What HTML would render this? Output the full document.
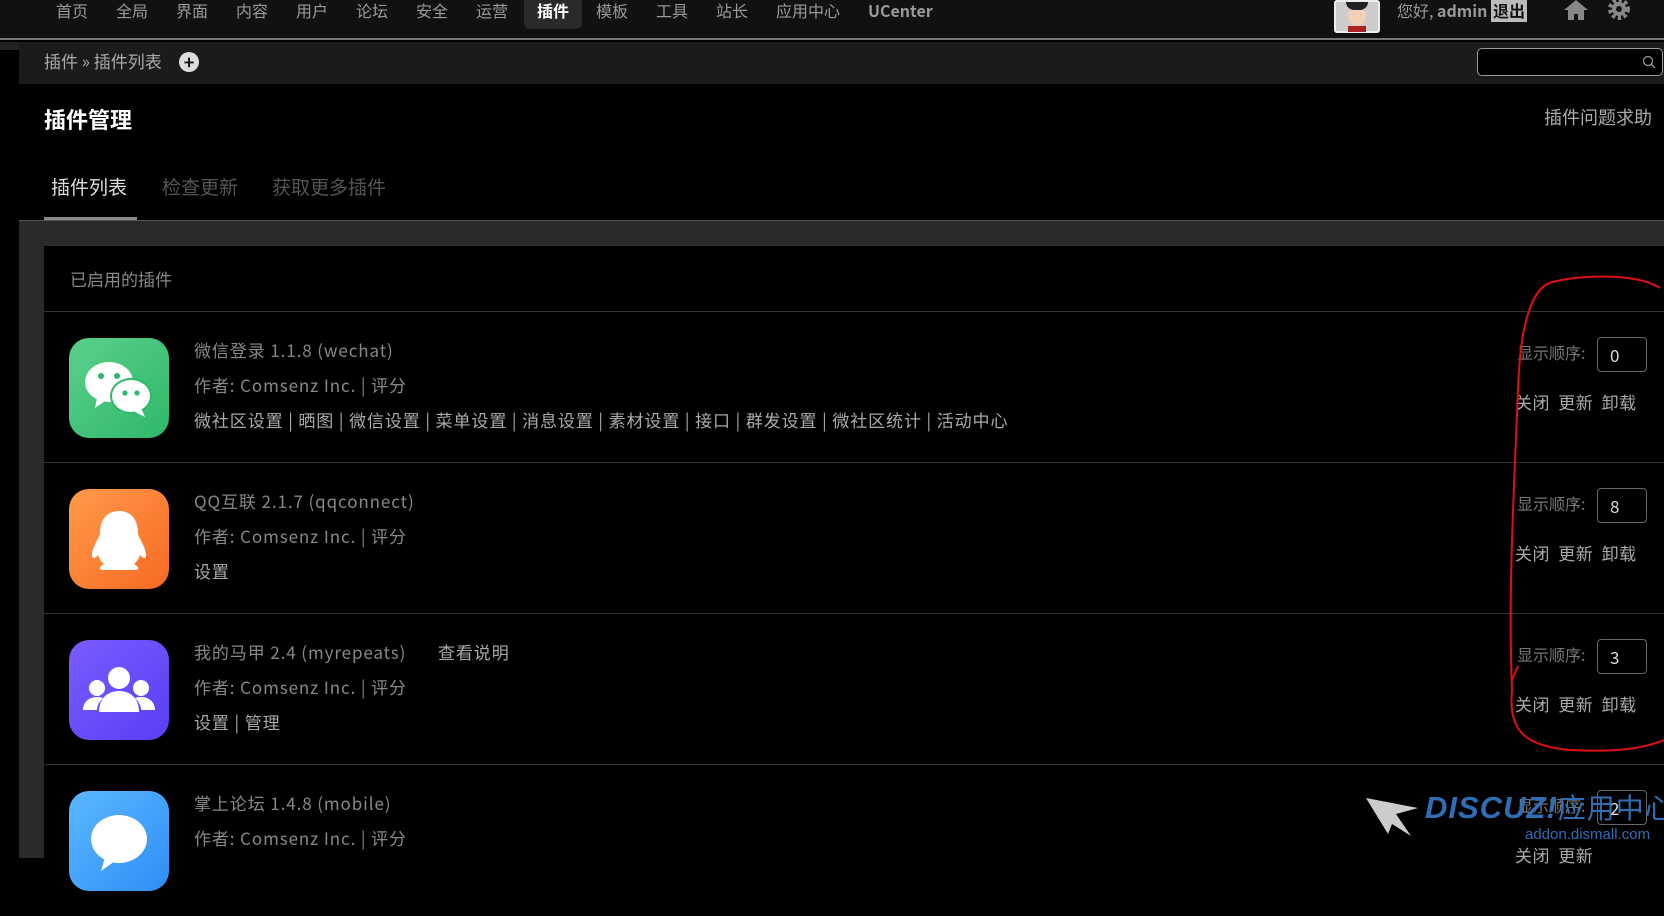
<!DOCTYPE html>
<html><head><meta charset="utf-8"><style>
*{margin:0;padding:0;box-sizing:border-box}
body{width:1664px;height:858px;overflow:hidden;background:#000;font-family:"Noto Sans CJK SC","Liberation Sans",sans-serif;color:#999;position:relative}
.a{position:absolute;white-space:nowrap}
.nav{left:0;top:0;width:1664px;height:40px;background:#111;border-bottom:2px solid #777}
.nav span{position:absolute;top:0;font-size:16px;color:#999;line-height:20px}
.bc{left:19px;top:42px;width:1645px;height:42px;background:#1b1b1b}
.row{position:absolute;left:44px;width:1620px;height:152px;border-top:1px solid #333}
.ic{position:absolute;left:25px;top:26px;width:100px;height:100px;border-radius:20px}
.t{position:absolute;left:150px;font-size:17px;color:#888;line-height:22px;letter-spacing:0.9px}
.l{color:#aaa}
.ord{position:absolute;left:1473px;top:29px;font-size:16px;color:#777;line-height:22px}
.inp{position:absolute;left:1553px;top:25px;width:50px;height:35px;border:1px solid #666;border-radius:4px;color:#ddd;font-size:17px;line-height:33px;padding-left:12px}
.ops{position:absolute;left:1471px;top:79px;font-size:17px;color:#aaa;word-spacing:4px;line-height:22px;letter-spacing:0.5px}
</style></head><body>
<div class="a nav">
<span style="left:56px;top:0">首页</span><span style="left:116px">全局</span><span style="left:176px">界面</span><span style="left:236px">内容</span><span style="left:296px">用户</span><span style="left:356px">论坛</span><span style="left:416px">安全</span><span style="left:476px">运营</span>
<div class="a" style="left:524px;top:0;width:58px;height:29px;background:#2a2a2a;border-radius:0 0 6px 6px"></div>
<span style="left:537px;color:#fff;font-weight:bold">插件</span><span style="left:596px">模板</span><span style="left:656px">工具</span><span style="left:716px">站长</span><span style="left:776px">应用中心</span><span style="left:868px;font-weight:bold">UCenter</span>
<div class="a" style="left:1334px;top:0;width:46px;height:33px;background:#ccc;border:2px solid #eee;border-radius:3px"><div class="a" style="left:12px;top:4px;width:18px;height:20px;background:#f2d0b8;border-radius:50%"></div><div class="a" style="left:10px;top:0;width:22px;height:8px;background:#222;border-radius:0 0 10px 10px"></div><div class="a" style="left:12px;top:24px;width:18px;height:6px;background:#a22"></div></div>
<span style="left:1397px">您好, <b>admin</b> <b style="background:#bbb;color:#111;padding:0 2px">退出</b></span>
<svg class="a" style="left:1563px;top:0" width="26" height="22" viewBox="0 0 26 22"><path d="M13 0L1 10h4v10h6v-6h4v6h6V10h4z" fill="#888"/></svg>
<svg class="a" style="left:1606px;top:0" width="26" height="22" viewBox="0 0 26 22"><circle cx="13" cy="9" r="8" fill="none" stroke="#888" stroke-width="6" stroke-dasharray="3 2.3"/><circle cx="13" cy="9" r="7" fill="#888"/><circle cx="13" cy="9" r="3" fill="#111"/></svg>
</div>
<div class="a" style="left:0;top:42px;width:19px;height:8px;background:#222"></div>
<div class="a bc"><span class="a" style="left:25px;top:8px;font-size:17px;color:#aaa;line-height:22px">插件 » 插件列表</span>
<div class="a" style="left:160px;top:10px;width:20px;height:20px;border-radius:50%;background:#ddd;color:#111;font-weight:bold;font-size:18px;line-height:20px;text-align:center">+</div>
<div class="a" style="left:1458px;top:6px;width:186px;height:28px;border:1px solid #999;border-radius:5px;background:#000"><svg class="a" style="left:164px;top:6px" width="14" height="14"><circle cx="6" cy="6" r="4.5" fill="none" stroke="#999" stroke-width="1.3"/><path d="M9 9l4 4" stroke="#999" stroke-width="1.3"/></svg></div></div>
<div class="a" style="left:44px;top:104px;font-size:22px;font-weight:bold;color:#fff;line-height:30px">插件管理</div>
<div class="a" style="left:1544px;top:104px;font-size:18px;color:#aaa;line-height:26px">插件问题求助</div>
<div class="a" style="left:51px;top:174px;font-size:19px;color:#ddd;line-height:26px">插件列表</div>
<div class="a" style="left:162px;top:174px;font-size:19px;color:#555;line-height:26px">检查更新</div>
<div class="a" style="left:272px;top:174px;font-size:19px;color:#555;line-height:26px">获取更多插件</div>
<div class="a" style="left:44px;top:217px;width:93px;height:3px;background:#888"></div>
<div class="a" style="left:19px;top:220px;width:1645px;height:26px;background:#2a2a2a;border-top:1px solid #555"></div>
<div class="a" style="left:19px;top:246px;width:25px;height:612px;background:#2a2a2a"></div>
<div class="a" style="left:70px;top:268px;font-size:17px;color:#888;line-height:22px">已启用的插件</div>

<div class="row" style="top:311px">
<div class="ic" style="background:linear-gradient(135deg,#5ad08c,#2fb86a)"><svg width="100" height="100"><ellipse cx="40" cy="44" rx="24" ry="20" fill="#fff"/><path d="M28 60l-2 10 10-7z" fill="#fff"/><ellipse cx="62" cy="58" rx="21" ry="18" fill="#2fb86a"/><ellipse cx="62" cy="58" rx="19" ry="16" fill="#fff"/><path d="M72 70l4 9-10-5z" fill="#fff"/><circle cx="32" cy="38" r="3" fill="#2fb86a"/><circle cx="48" cy="38" r="3" fill="#2fb86a"/><circle cx="56" cy="55" r="2.6" fill="#2fb86a"/><circle cx="68" cy="55" r="2.6" fill="#2fb86a"/></svg></div>
<div class="t" style="top:27px">微信登录 1.1.8 (wechat)</div>
<div class="t" style="top:62px">作者: Comsenz Inc. | 评分</div>
<div class="t l" style="top:97px">微社区设置 | 晒图 | 微信设置 | 菜单设置 | 消息设置 | 素材设置 | 接口 | 群发设置 | 微社区统计 | 活动中心</div>
<div class="ord">显示顺序:</div><div class="inp">0</div><div class="ops">关闭 更新 卸载</div>
</div>
<div class="row" style="top:462px">
<div class="ic" style="background:linear-gradient(135deg,#ff9a4a,#f76a22)"><svg width="100" height="100"><path d="M50 22c-13 0-19 10-19 22 0 4-8 14-8 22 0 5 4 3 6 0 2 6 6 9 6 9-4 2-6 5-2 6h34c4-1 2-4-2-6 0 0 4-3 6-9 2 3 6 5 6 0 0-8-8-18-8-22 0-12-6-22-19-22z" fill="#fff"/></svg></div>
<div class="t" style="top:27px">QQ互联 2.1.7 (qqconnect)</div>
<div class="t" style="top:62px">作者: Comsenz Inc. | 评分</div>
<div class="t l" style="top:97px">设置</div>
<div class="ord">显示顺序:</div><div class="inp">8</div><div class="ops">关闭 更新 卸载</div>
</div>
<div class="row" style="top:613px">
<div class="ic" style="background:linear-gradient(135deg,#7a5cff,#5b3df5)"><svg width="100" height="100"><circle cx="50" cy="38" r="11" fill="#fff"/><circle cx="28" cy="48" r="8" fill="#fff"/><circle cx="72" cy="48" r="8" fill="#fff"/><path d="M30 72c0-14 9-21 20-21s20 7 20 21z" fill="#fff"/><path d="M14 70c0-8 6-13 14-13 4 0 6 1 6 1-4 4-6 8-6 12z" fill="#fff"/><path d="M86 70c0-8-6-13-14-13-4 0-6 1-6 1 4 4 6 8 6 12z" fill="#fff"/></svg></div>
<div class="t" style="top:27px">我的马甲 2.4 (myrepeats)</div>
<div class="t l" style="top:27px;left:394px">查看说明</div>
<div class="t" style="top:62px">作者: Comsenz Inc. | 评分</div>
<div class="t l" style="top:97px">设置 | 管理</div>
<div class="ord">显示顺序:</div><div class="inp">3</div><div class="ops">关闭 更新 卸载</div>
</div>
<div class="row" style="top:764px">
<div class="ic" style="background:linear-gradient(135deg,#5ab8ff,#2f8ef5)"><svg width="100" height="100"><ellipse cx="50" cy="48" rx="28" ry="24" fill="#fff"/><path d="M36 66l-4 14 14-10z" fill="#fff"/></svg></div>
<div class="t" style="top:27px">掌上论坛 1.4.8 (mobile)</div>
<div class="t" style="top:62px">作者: Comsenz Inc. | 评分</div>
<div class="ord">显示顺序:</div><div class="inp">2</div><div class="ops">关闭 更新</div>
</div>

<svg class="a" style="left:1366px;top:798px" width="60" height="40"><path d="M0 0l52 10-22 6 15 22-19-12-4 10z" fill="#ccc"/></svg>
<div class="a" style="left:1425px;top:790px;font-size:31px;font-weight:bold;font-style:italic;color:#2f6db5;letter-spacing:1px;font-family:'Liberation Sans','Noto Sans CJK SC',sans-serif;line-height:36px">DISCUZ!<span style="font-weight:normal;font-style:normal;font-size:28px">应用中心</span></div>
<div class="a" style="left:1525px;top:826px;font-size:15px;color:#2f6db5;font-family:'Liberation Sans',sans-serif">addon.dismall.com</div>

<svg class="a" style="left:1490px;top:270px" width="174" height="495"><path d="M170 18C150 5 100 3 62 12 40 18 30 60 28 120 24 220 18 320 22 420 18 460 34 476 80 480 120 482 150 480 174 470" fill="none" stroke="#d11" stroke-width="2"/><path d="M22 410l6-14" stroke="#d11" stroke-width="2"/></svg>
</body></html>
